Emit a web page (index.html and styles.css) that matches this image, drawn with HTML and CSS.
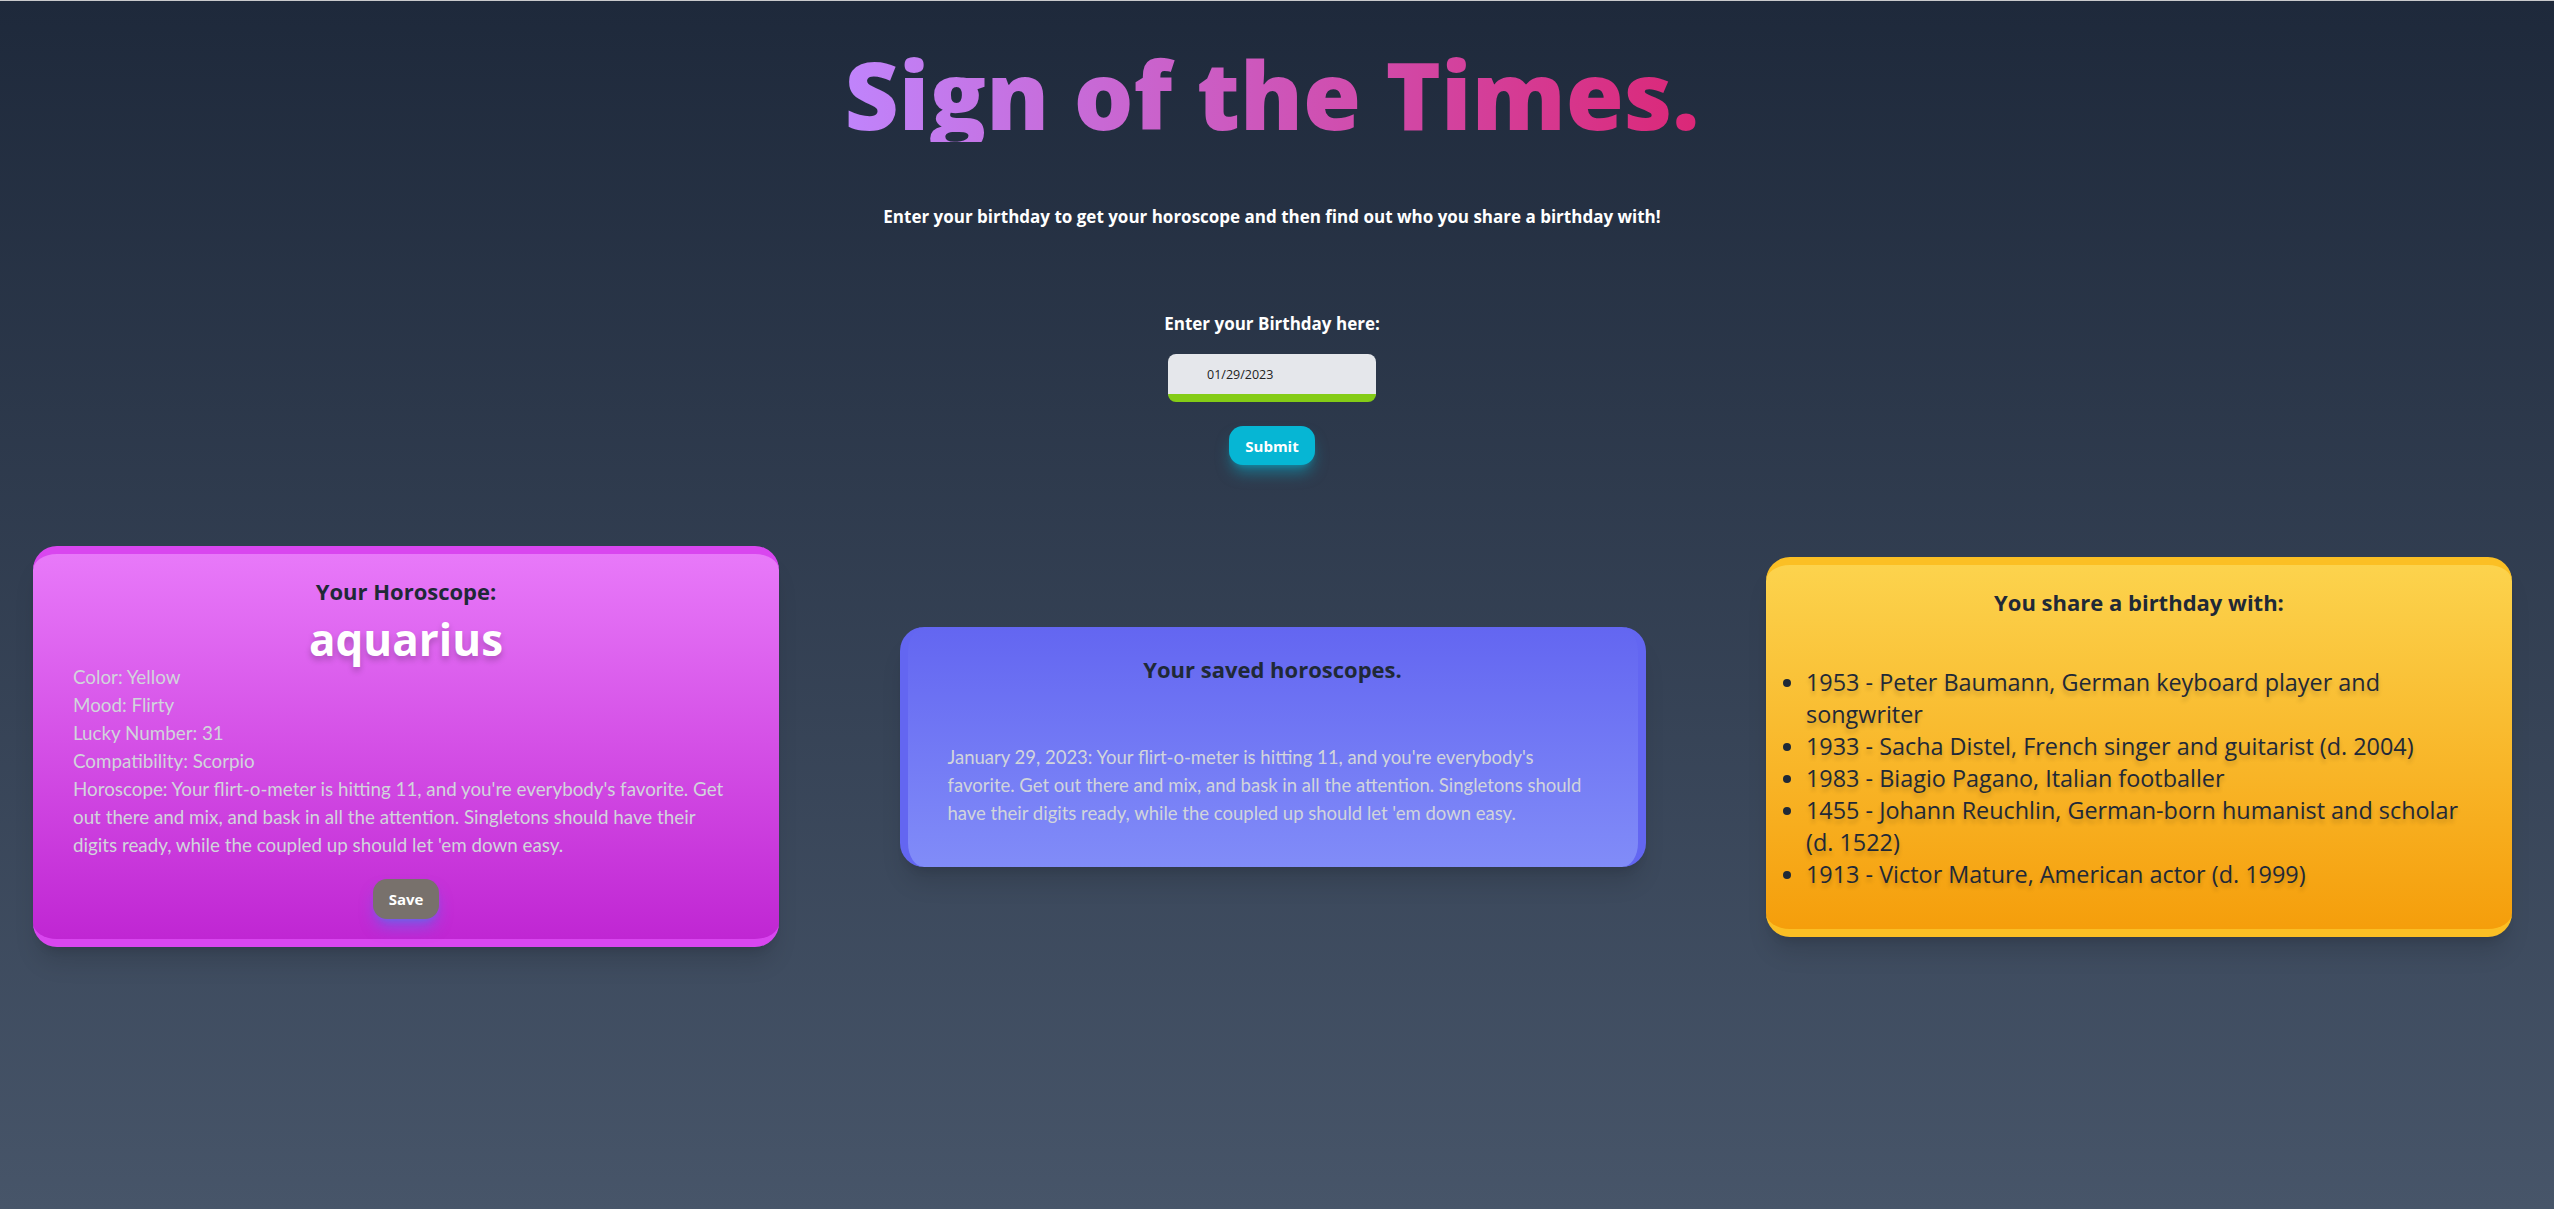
FILE: index.html
```html
<!DOCTYPE html>
<html lang="en">
<head>
<meta charset="utf-8">
<title>Sign of the Times.</title>
<link rel="stylesheet" href="styles.css">
</head>
<body>
<div class="page">
  <header class="hero">
    <h1 class="title">Sign of the Times.</h1>
    <p class="subtitle">Enter your birthday to get your horoscope and then find out who you share a birthday with!</p>
  </header>
  <form class="birth-form">
    <label class="birth-label" for="bday">Enter your Birthday here:</label>
    <input class="birth-input" id="bday" type="text" value="01/29/2023" readonly>
    <button class="btn btn-submit" type="button">Submit</button>
  </form>
  <section class="cards">
    <article class="card card-horoscope">
      <h2 class="card-title">Your Horoscope:</h2>
      <div class="sign">aquarius</div>
      <div class="details">
        <div>Color: Yellow</div>
        <div>Mood: Flirty</div>
        <div>Lucky Number: 31</div>
        <div>Compatibility: Scorpio</div>
        <div>Horoscope: Your flirt-o-meter is hitting 11, and you're everybody's favorite. Get out there and mix, and bask in all the attention. Singletons should have their digits ready, while the coupled up should let 'em down easy.</div>
      </div>
      <div class="save-row"><button class="btn btn-save" type="button">Save</button></div>
    </article>
    <article class="card card-saved">
      <h2 class="card-title">Your saved horoscopes.</h2>
      <p class="saved-text">January 29, 2023: Your flirt-o-meter is hitting 11, and you're everybody's favorite. Get out there and mix, and bask in all the attention. Singletons should have their digits ready, while the coupled up should let 'em down easy.</p>
    </article>
    <article class="card card-birthday">
      <h2 class="card-title">You share a birthday with:</h2>
      <ul class="bday-list">
        <li>1953 - Peter Baumann, German keyboard player and songwriter</li>
        <li>1933 - Sacha Distel, French singer and guitarist (d. 2004)</li>
        <li>1983 - Biagio Pagano, Italian footballer</li>
        <li>1455 - Johann Reuchlin, German-born humanist and scholar (d. 1522)</li>
        <li>1913 - Victor Mature, American actor (d. 1999)</li>
      </ul>
    </article>
  </section>
</div>
</body>
</html>
```
FILE: styles.css
```css
* { box-sizing: border-box; }
html, body { margin: 0; padding: 0; }
body {
  font-family: "Open Sans", "Liberation Sans", sans-serif;
  background: linear-gradient(to bottom, #1e293b, #475569);
  min-height: 100vh;
  border-top: 1px solid #c9cacc;
  color: #fff;
}
.page {
  min-height: 1208px;
  padding-right: 10px;
}
.hero { text-align: center; }
.title {
  margin: 45px 0 0;
  font-size: 94px;
  line-height: 96px;
  font-weight: 800;
  display: inline-block;
  background: linear-gradient(to right, #c084fc, #db2777);
  -webkit-background-clip: text;
  background-clip: text;
  color: transparent;
}
.subtitle {
  margin: 63px 0 0;
  font-size: 17px;
  line-height: 24px;
  font-weight: 700;
}
.birth-form {
  display: flex;
  flex-direction: column;
  align-items: center;
  margin-top: 83px;
}
.birth-label {
  font-size: 17px;
  line-height: 24px;
  font-weight: 700;
}
.birth-input {
  margin-top: 18px;
  width: 208px;
  height: 48px;
  border: 0;
  border-bottom: 8px solid #84cc16;
  border-radius: 8px;
  background: #e5e7eb;
  color: #222;
  font-family: "Open Sans", "Liberation Sans", sans-serif;
  font-size: 12.5px;
  padding: 0 0 0 39px;
  outline: none;
}
.btn {
  border: 0;
  color: #fff;
  font-family: "Open Sans", "Liberation Sans", sans-serif;
  font-weight: 700;
  font-size: 15px;
  border-radius: 14px;
  height: 40px;
  padding: 0;
  cursor: pointer;
}
.btn-submit {
  margin-top: 24px;
  height: 39px;
  width: 86px;
  background: #06b6d4;
  box-shadow: 0 10px 15px -3px rgba(6, 182, 212, 0.5), 0 4px 6px -4px rgba(6, 182, 212, 0.5);
}
.cards {
  display: flex;
  justify-content: space-between;
  align-items: center;
  margin-top: 81px;
  padding: 0 32px 0 33px;
}
.card {
  width: 746px;
  border-radius: 24px;
  box-shadow: 0 20px 25px -5px rgba(0, 0, 0, 0.12), 0 8px 10px -6px rgba(0, 0, 0, 0.12);
}
.card-title {
  margin: 0;
  text-align: center;
  font-size: 22px;
  line-height: 32px;
  font-weight: 700;
  color: #1f2937;
}
.card-horoscope {
  border-top: 8px solid #d946ef;
  border-bottom: 8px solid #d946ef;
  background: linear-gradient(to bottom, #e879f9, #c026d3);
  padding: 21px 40px 20px;
}
.sign {
  text-align: center;
  font-size: 44px;
  line-height: 48px;
  font-weight: 700;
  margin-top: 8px;
  color: #fff;
  text-shadow: 0 4px 6px rgba(0, 0, 0, 0.22);
}
.details {
  font-family: "Lato", "Open Sans", sans-serif;
  font-size: 18.8px;
  line-height: 28px;
  color: #d1d5db;
}
.save-row {
  display: flex;
  justify-content: center;
  margin-top: 20px;
}
.btn-save {
  width: 66px;
  background: #78716c;
  box-shadow: 0 10px 15px -3px rgba(59, 130, 246, 0.5), 0 4px 6px -4px rgba(59, 130, 246, 0.5);
}
.card-saved {
  border-left: 8px solid #6366f1;
  border-right: 8px solid #6366f1;
  background: linear-gradient(to bottom, #6366f1, #818cf8);
  padding: 26px 40px 40px;
  height: 240px;
}
.saved-text {
  margin: 58px 0 0;
  font-family: "Lato", "Open Sans", sans-serif;
  font-size: 18.5px;
  line-height: 28px;
  color: #d1d5db;
}
.card-birthday {
  border-top: 8px solid #fbbf24;
  border-bottom: 8px solid #fbbf24;
  background: linear-gradient(to bottom, #fcd34d, #f59e0b);
  padding: 21px 0 39px;
}
.bday-list {
  margin: 48px 0 0;
  padding: 0 40px 0 40px;
  font-size: 23.4px;
  line-height: 32px;
  color: #1f2937;
  text-shadow: 0 4px 4px rgba(0, 0, 0, 0.18);
}
```
